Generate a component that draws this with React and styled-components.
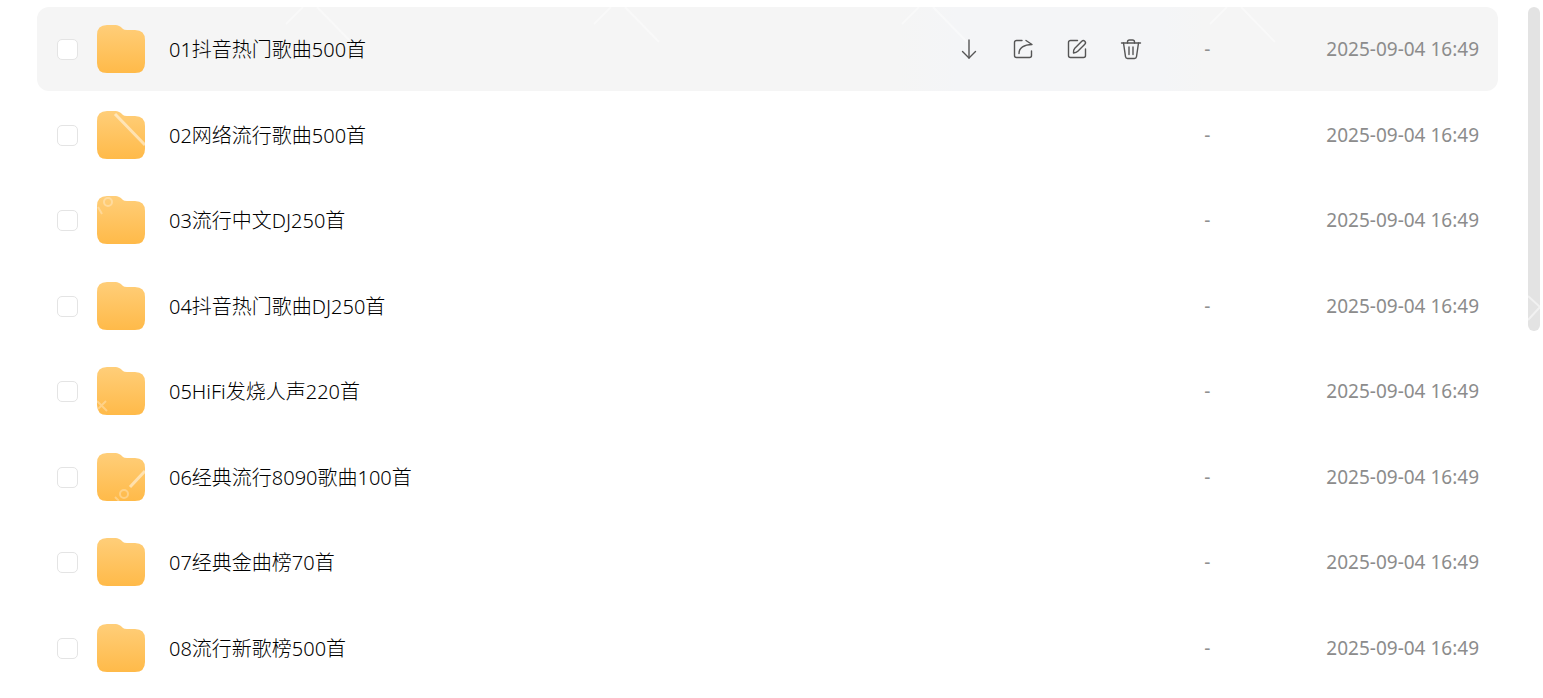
import styled, { createGlobalStyle } from "styled-components";

const GlobalStyle = createGlobalStyle`
  * {
    box-sizing: border-box;
  }
  body {
    margin: 0;
    background: #fff;
    font-family: "Noto Sans", "Noto Sans CJK SC", sans-serif;
    overflow: hidden;
  }
`;

const Page = styled.main`
  position: relative;
  display: flex;
  justify-content: space-between;
  align-items: flex-start;
  padding: 7px 3px 0 37px;
`;

const FileTable = styled.table`
  display: block;
  flex: 1;
  margin-right: 30px;
`;

const FileList = styled.tbody`
  display: flex;
  flex-direction: column;
`;

const Row = styled.tr`
  display: flex;
  align-items: center;
  height: 84px;
  padding: 0 19px 0 20px;
  margin-bottom: 2px;
  border-radius: 12px;
  background: ${(props) => (props.$active ? "#f5f5f5" : "transparent")};

  &:nth-child(even) {
    margin-bottom: 1px;
  }
`;

const CheckCell = styled.td`
  display: flex;
  width: 40px;
  padding: 0;
`;

const Checkbox = styled.input`
  appearance: none;
  width: 21px;
  height: 21px;
  margin: 0;
  border: 1px solid #e4e4e4;
  border-radius: 5px;
  background: #fff;

  &:checked {
    background: #06a7ff;
  }
`;

const NameCell = styled.td`
  display: flex;
  flex: 1;
  align-items: center;
  gap: 24px;
  padding: 0;
`;

const Name = styled.label`
  padding-top: 2px;
  color: #000;
  font-size: 20px;
  font-weight: 300;
  line-height: 28px;
  white-space: nowrap;
`;

const ActionCell = styled.td`
  display: flex;
  align-items: center;
  align-self: stretch;
  gap: 30px;
  padding: 0 61px 0 60px;
  background: linear-gradient(
    90deg,
    transparent,
    #f4f5f7 60px,
    #f4f5f7 calc(100% - 40px),
    transparent
  );
`;

const ActionButton = styled.button`
  display: flex;
  width: 24px;
  height: 24px;
  padding: 0;
  border: none;
  background: none;
  color: #555;
  cursor: pointer;
`;

const SizeCell = styled.td`
  width: 122px;
  padding: 0;
  color: #909090;
  font-size: 19px;
  line-height: 28px;
`;

const DateCell = styled.td`
  padding: 0;
  color: #8c8c8c;
  font-size: 19px;
  line-height: 28px;
  white-space: nowrap;
`;

const ScrollThumb = styled.div`
  width: 12px;
  height: 324px;
  border-radius: 6px;
  background: #e3e3e3;
`;

const Watermark = styled.svg`
  position: absolute;
  top: 0;
  left: 0;
  pointer-events: none;
`;

const files = [
  "01抖音热门歌曲500首",
  "02网络流行歌曲500首",
  "03流行中文DJ250首",
  "04抖音热门歌曲DJ250首",
  "05HiFi发烧人声220首",
  "06经典流行8090歌曲100首",
  "07经典金曲榜70首",
  "08流行新歌榜500首",
];

const actions = [
  { label: "下载", paths: ["M12 3v18", "M5.5 14.5l6.5 6.500 6.500-6.500"] },
  {
    label: "分享",
    paths: [
      "M11 3.500H5.500a2 2 0 0 0-2 2v13a2 2 0 0 0 2 2h13a2 2 0 0 0 2-2V14",
      "M8 16.500C8 11 13 7.500 21 7.500L15 3.500",
    ],
  },
  {
    label: "重命名",
    paths: [
      "M12.500 3.500H5.500a2 2 0 0 0-2 2v13a2 2 0 0 0 2 2h13a2 2 0 0 0 2-2V12",
      "M8.500 16q-.3-3 1.300-4.700l7-7a2 2 0 0 1 3 3l-7 7q-1.500 1.500-4.300 1.700z",
    ],
  },
  {
    label: "删除",
    paths: [
      "M2.500 6h19",
      "M8.500 6V5a2 2 0 0 1 2-2h3a2 2 0 0 1 2 2v1",
      "M4.500 6l2 13.700q.3 1.800 2 1.800h7q1.700 0 2-1.800L19.500 6",
      "M10 10v7.500",
      "M14 10v7.500",
    ],
  },
];

const FolderIcon = () => (
  <svg width="48" height="48" viewBox="0 0 48 48" aria-hidden="true">
    <defs>
      <linearGradient id="folder" x1="0" y1="0" x2="0" y2="1">
        <stop offset="0" stopColor="#ffce79" />
        <stop offset="1" stopColor="#ffba49" />
      </linearGradient>
    </defs>
    <path
      fill="url(#folder)"
      d="M0 10Q0 0 10 0H17C22 0 24 2 26 4Q27 5 30 5H38Q48 5 48 15V38Q48 48 38 48H10Q0 48 0 38Z"
    />
  </svg>
);

const App = () => {
  return (
    <>
      <GlobalStyle />
      <Page>
        <FileTable>
          <FileList>
            {files.map((name, index) => (
              <Row key={name} $active={index === 0}>
                <CheckCell>
                  <Checkbox type="checkbox" id={`file-${index}`} />
                </CheckCell>
                <NameCell>
                  <FolderIcon />
                  <Name htmlFor={`file-${index}`}>{name}</Name>
                </NameCell>
                {index === 0 && (
                  <ActionCell>
                    {actions.map(({ label, paths }) => (
                      <ActionButton key={label} type="button" aria-label={label}>
                        <svg
                          width="24"
                          height="24"
                          viewBox="0 0 24 24"
                          fill="none"
                          stroke="currentColor"
                          strokeWidth="1.4"
                          strokeLinecap="round"
                          strokeLinejoin="round"
                        >
                          {paths.map((d) => (
                            <path key={d} d={d} />
                          ))}
                        </svg>
                      </ActionButton>
                    ))}
                  </ActionCell>
                )}
                <SizeCell>-</SizeCell>
                <DateCell>2025-09-04 16:49</DateCell>
              </Row>
            ))}
          </FileList>
        </FileTable>
        <ScrollThumb />
        <Watermark width="1543" height="698" fill="none" stroke="#fff" aria-hidden="true">
          {[308, 616, 924, 1232].map((x) => (
            <path
              key={x}
              strokeOpacity="0.4"
              strokeWidth="2"
              d={`M${x - 22} 24l17-17M${x + 9} 7l34 35`}
            />
          ))}
          <path
            strokeOpacity="0.5"
            strokeWidth="3"
            d="M115 114l30 31M130 487l15-16"
          />
          <path strokeOpacity="0.5" strokeWidth="2" d="M1528 296l12 11-12 13" />
          <g strokeOpacity="0.3" strokeWidth="2">
            <circle cx="108" cy="202" r="4" />
            <path d="M98 207l4 7M97 401l10 10M98 409l8-8" />
            <circle cx="124" cy="494" r="4" />
            <path d="M115 497l4 4" />
          </g>
        </Watermark>
      </Page>
    </>
  );
};

export default App;
